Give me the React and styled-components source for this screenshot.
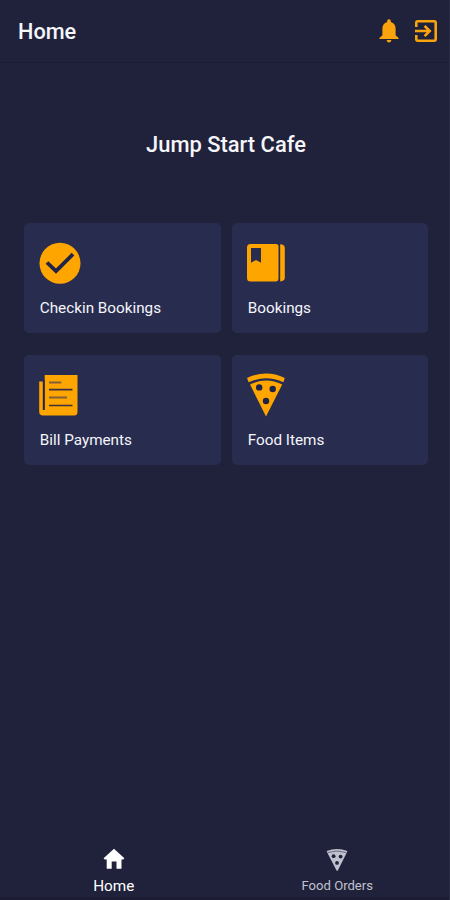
import React from "react";
import styled, { createGlobalStyle } from "styled-components";

const GlobalStyle = createGlobalStyle`
  * { box-sizing: border-box; }
  body { margin: 0; background: #20213a; font-family: Roboto, sans-serif; }
`;

const Screen = styled.div`
  display: flex;
  flex-direction: column;
  width: 450px;
  height: 900px;
  background: #20213a;
  border-right: 1px solid #2a2b45;
  color: #f5f5fa;
  overflow: hidden;
`;

const Header = styled.header`
  display: flex;
  align-items: center;
  justify-content: space-between;
  height: 63px;
  flex: none;
  padding: 0 12px 1px 18px;
  border-bottom: 1px solid #1c1c34;
  background: #20223c;
`;

const PageTitle = styled.h1`
  margin: 2px 0 0;
  font-size: 21.7px;
  line-height: 26px;
  font-weight: 500;
`;

const Actions = styled.div`
  display: flex;
  align-items: center;
  gap: 16px;
`;

const IconButton = styled.button`
  display: flex;
  padding: 0;
  border: 0;
  background: none;
  color: #f9a40d;
`;

const Main = styled.main`
  display: flex;
  flex: 1;
  flex-direction: column;
  padding: 68px 21px 0 24px;
`;

const CafeName = styled.h2`
  margin: 0 0 64px;
  text-align: center;
  font-size: 21.9px;
  line-height: 28px;
  font-weight: 500;
`;

const Grid = styled.div`
  display: grid;
  grid-template-columns: 197px 196px;
  grid-auto-rows: 110px;
  column-gap: 11px;
  row-gap: 22px;
`;

const Card = styled.a`
  display: flex;
  flex-direction: column;
  justify-content: space-between;
  padding: 18px 15px 15px;
  border-radius: 5px;
  background: #282d50;
`;

const CardIcon = styled.span`
  display: flex;
  height: 46px;
  color: #fea500;
`;

const CardLabel = styled.span`
  padding-left: 0.8px;
  font-size: 15.25px;
  line-height: 20px;
`;

const TabBar = styled.nav`
  display: flex;
  flex: none;
  height: 60px;
  padding-left: 2px;
  border-bottom: 3px solid #1c1c34;
`;

const Tab = styled.a`
  display: flex;
  flex: 1;
  flex-direction: column;
  align-items: center;
  padding-top: 7px;
  color: ${(p) => (p.$active ? "#ffffff" : "#c0c1cf")};
`;

const TabLabel = styled.span`
  margin-top: 7px;
  font-size: ${(p) => (p.$active ? "15.3px" : "13.1px")};
  line-height: 16px;
`;

const Bell = () => (
  <svg width="20" height="26" viewBox="0 0 20 26" fill="currentColor">
    <path d="M10 1.2c1.2 0 1.8.8 1.8 1.9v.8c3.3.9 4.8 3.4 4.8 6.8v6.5l3 2.700v1.200H.4v-1.200l3-2.700v-6.500c0-3.400 1.500-5.900 4.800-6.800v-.8c0-1.100.6-1.900 1.800-1.900zM7.700 22h4.600c0 1.500-.9 2.400-2.300 2.400S7.700 23.500 7.700 22z" />
  </svg>
);

const Exit = () => (
  <svg width="22" height="22" viewBox="0 0 22 22" fill="none" stroke="currentColor" strokeWidth="2.600">
    <path d="M1.300 7V2.700Q1.300 1.300 2.700 1.300H19.300Q20.700 1.300 20.700 2.700V19.300Q20.700 20.700 19.300 20.700H2.700Q1.300 20.700 1.300 19.300V15M0 11H14M9.600 5.900L14.700 11L9.600 16.100" />
  </svg>
);

const Check = () => (
  <svg width="42" height="46" viewBox="0 0 42 46">
    <circle cx="21" cy="22.300" r="20.500" fill="currentColor" />
    <path d="M8 21.500L17 30.200L34 13.200" fill="none" stroke="#202348" strokeWidth="3.800" />
  </svg>
);

const Book = () => (
  <svg width="40" height="46" viewBox="0 0 40 46" fill="currentColor">
    <path fillRule="evenodd" d="M3.500 3H29Q31.500 3 31.500 5.500V37.500Q31.500 40.500 28.500 40.500H3.500Q0 40.500 0 37V6.500Q0 3 3.500 3zM4 7V21.700L9 19L14 21.700V7z" />
    <path d="M33.200 3.200Q37.800 3.500 37.800 7V36.500Q37.800 40.200 33.200 40.400Z" />
  </svg>
);

const Bill = () => (
  <svg width="40" height="46" viewBox="0 0 40 46">
    <path d="M5.700 2H38.500V39Q38.500 42.500 35 42.500H4Q.2 42.500 .2 38.700V8.500H3.800V37H5.700z" fill="currentColor" />
    <path d="M4.800 7V37" stroke="#202348" strokeWidth="1.500" />
    <path d="M10 9.500H22.200M10 24.500H28" stroke="#80613a" strokeWidth="1.900" />
    <path d="M10 16.700H33.500M10 32.500H33.500" stroke="#3b3141" strokeWidth="1.700" />
  </svg>
);

const Pizza = () => (
  <svg width="39" height="46" viewBox="0 0 39 46">
    <path d="M0 4.900Q19-3.700 37.800 4.900L36.400 9.200Q19 1.400 1.700 9.200z" fill="currentColor" />
    <path d="M3.100 11.600Q19 3.500 35.200 11.600L19 43.500z" fill="currentColor" />
    <g fill="#202348">
      <circle cx="12.200" cy="14.400" r="3.200" />
      <circle cx="25.700" cy="16" r="3.200" />
      <circle cx="19" cy="28" r="3.200" />
    </g>
  </svg>
);

const TabPizza = () => (
  <svg width="22" height="24" viewBox="0 0 22 24">
    <path d="M.6 4Q11 .1 21.400 4L19.600 8L11.700 23.700H10.700L2.500 8z" fill="currentColor" />
    <path d="M2 5.500Q11 2.500 20 5.500" fill="none" stroke="#62637a" strokeWidth=".9" />
    <g fill="#20213a">
      <circle cx="7.600" cy="9.200" r="1.900" />
      <circle cx="14.600" cy="9.600" r="1.900" />
      <circle cx="11" cy="15.900" r="1.900" />
    </g>
  </svg>
);

const House = () => (
  <svg width="22" height="24" viewBox="0 0 22 24" fill="currentColor">
    <path d="M11 1.700L21.400 11.300L20.300 12.500H18.500V21.700H13.500V14.500H8.700V21.700H3.700V12.500H1.700L.6 11.300z" />
  </svg>
);

const cards = [
  { label: "Checkin Bookings", Icon: Check },
  { label: "Bookings", Icon: Book },
  { label: "Bill Payments", Icon: Bill },
  { label: "Food Items", Icon: Pizza },
];

export default function App() {
  return (
    <>
      <GlobalStyle />
      <Screen>
        <Header>
          <PageTitle>Home</PageTitle>
          <Actions>
            <IconButton aria-label="Notifications"><Bell /></IconButton>
            <IconButton aria-label="Log out"><Exit /></IconButton>
          </Actions>
        </Header>
        <Main>
          <CafeName>Jump Start Cafe</CafeName>
          <Grid>
            {cards.map(({ label, Icon }) => (
              <Card key={label}>
                <CardIcon><Icon /></CardIcon>
                <CardLabel>{label}</CardLabel>
              </Card>
            ))}
          </Grid>
        </Main>
        <TabBar>
          <Tab $active>
            <House />
            <TabLabel $active>Home</TabLabel>
          </Tab>
          <Tab>
            <TabPizza />
            <TabLabel>Food Orders</TabLabel>
          </Tab>
        </TabBar>
      </Screen>
    </>
  );
}
